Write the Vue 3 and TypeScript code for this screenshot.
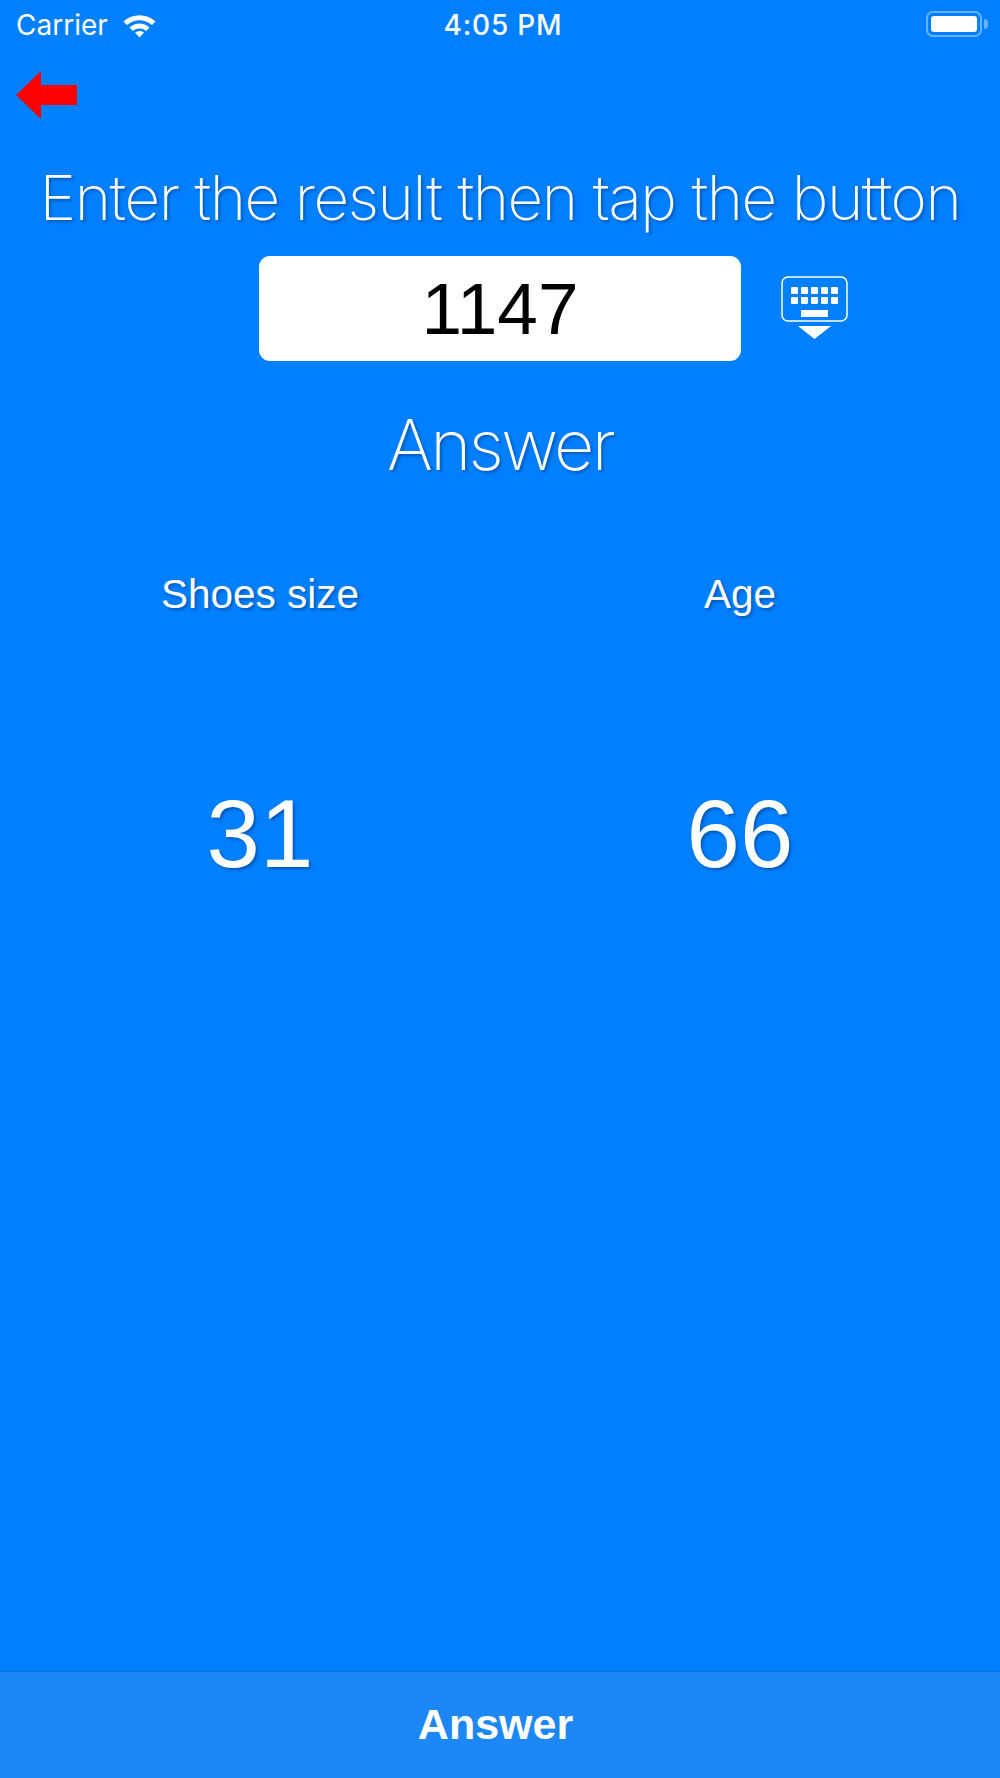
<script setup lang="ts">
const keyRows = [0, 1]
const keyCols = [0, 1, 2, 3, 4]

const columns = [
  { label: "Shoes size", value: "31" },
  { label: "Age", value: "66" }
]
</script>

<template>
  <main class="screen">
    <header class="status-bar">
      <div class="status-left">
        <span class="carrier">Carrier</span>
        <svg class="wifi" width="35" height="25" viewBox="0 0 35 25" aria-hidden="true">
          <path d="M1.500 8.500C10.500 0 24.500 0 33.500 8.500L30 12C22.500 5.500 12.500 5.500 5 12Z" fill="#fff" />
          <path d="M7.500 14.500C13.500 9.300 21.500 9.300 27.500 14.500L24 18C20 14.800 15 14.800 11 18Z" fill="#fff" />
          <path d="M13 19.500C15.800 17.500 19.200 17.500 22 19.500L17.500 24.500Z" fill="#fff" />
        </svg>
      </div>
      <span class="clock">4:05 PM</span>
      <div class="status-right">
        <div class="battery"><div class="battery-fill"></div></div>
        <div class="battery-nub"></div>
      </div>
    </header>

    <div class="back-row">
      <svg width="62" height="48" viewBox="0 0 62 48" aria-label="Back">
        <path d="M0 24L25 0V14H61V34H25V48Z" fill="#ff0000" />
      </svg>
    </div>

    <h1 class="title">Enter the result then tap the button</h1>

    <div class="entry-row">
      <div class="entry">1147</div>
      <svg class="keyboard" width="68" height="64" viewBox="0 0 68 64" aria-label="Hide keyboard">
        <rect x="1" y="1" width="65" height="44" rx="6" fill="none" stroke="#fff" stroke-width="1.500" />
        <template v-for="r in keyRows" :key="r">
          <rect
            v-for="c in keyCols"
            :key="c"
            :x="10 + c * 10"
            :y="11 + r * 10"
            width="7"
            height="7"
            rx="1"
            fill="#fff"
          />
        </template>
        <rect x="20" y="34" width="27" height="7" fill="#fff" />
        <path d="M17 50H50L33.500 63Z" fill="#fff" />
      </svg>
    </div>

    <h2 class="answer-heading">Answer</h2>

    <section class="results">
      <div v-for="col in columns" :key="col.label" class="result">
        <div class="result-label">{{ col.label }}</div>
        <div class="result-value">{{ col.value }}</div>
      </div>
    </section>

    <button class="answer-btn" type="button">Answer</button>
  </main>
</template>

<style scoped>
.screen {
  height: 1778px;
  display: flex;
  flex-direction: column;
  background: #007fff;
  color: #fff;
  font-family: "Liberation Sans", Arial, sans-serif;
}

.status-bar {
  height: 50px;
  display: flex;
  align-items: center;
  justify-content: space-between;
  padding: 0 12px 0 16px;
  position: relative;
  flex-shrink: 0;
}

.status-left {
  display: flex;
  align-items: center;
  gap: 14px;
}

.carrier,
.clock {
  font-family: Inter, sans-serif;
  font-size: 28px;
}

.clock {
  font-weight: 500;
  letter-spacing: 0.8px;
  position: absolute;
  left: 6px;
  right: 0;
  text-align: center;
}

.status-right {
  display: flex;
  align-items: center;
  gap: 2px;
  margin-bottom: 2px;
}

.battery {
  width: 56px;
  height: 26px;
  box-sizing: border-box;
  padding: 3px;
  border: 2px solid #66b2ff;
  border-radius: 7px;
}

.battery-fill {
  height: 100%;
  background: #fff;
  border-radius: 3px;
}

.battery-nub {
  width: 4px;
  height: 10px;
  background: #66b2ff;
  border-radius: 0 4px 4px 0;
}

.back-row {
  height: 48px;
  margin-top: 21px;
  padding-left: 16px;
  display: flex;
}

.title {
  margin: 41px 0 0;
  font-family: Inter, sans-serif;
  font-weight: 200;
  font-size: 62px;
  line-height: 76px;
  letter-spacing: -1.460px;
  text-align: center;
  white-space: nowrap;
  text-shadow: 2px 2px 3px rgba(0, 0, 0, 0.3);
}

.entry-row {
  margin-top: 20px;
  padding-left: 259px;
  display: flex;
  align-items: center;
  gap: 40px;
}

.entry {
  width: 482px;
  height: 105px;
  background: #fff;
  border-radius: 11px;
  color: #000;
  font-size: 73px;
  line-height: 105px;
  text-align: center;
}

.keyboard {
  margin-top: -2px;
}

.answer-heading {
  margin: 39px 0 0;
  font-family: Inter, sans-serif;
  font-weight: 200;
  font-size: 70px;
  line-height: 90px;
  letter-spacing: -2.700px;
  text-align: center;
  text-shadow: 2px 2px 3px rgba(0, 0, 0, 0.3);
}

.results {
  flex: 1;
  padding: 0 20px;
  display: grid;
  grid-template-columns: 1fr 1fr;
}

.result {
  text-align: center;
  text-shadow: 2px 2px 3px rgba(0, 0, 0, 0.3);
}

.result-label {
  margin-top: 81px;
  font-size: 40.500px;
  line-height: 46px;
}

.result-value {
  margin-top: 162px;
  font-size: 96px;
  line-height: 110px;
}

.answer-btn {
  height: 107px;
  flex-shrink: 0;
  border: 0;
  border-top: 1px solid #0a6fd6;
  padding: 0 9px 2px 0;
  background: #1d87f5;
  color: #fff;
  font-family: "Liberation Sans", Arial, sans-serif;
  font-size: 43px;
  font-weight: 700;
}
</style>
